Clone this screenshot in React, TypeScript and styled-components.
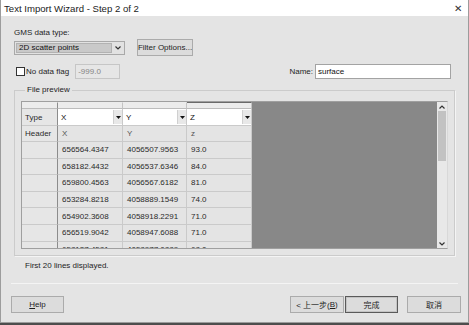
import React from "react";
import styled, { createGlobalStyle, css } from "styled-components";

const GlobalStyle = createGlobalStyle`
  * { box-sizing: border-box; }
  body {
    margin: 0;
    background: #4d4d4d;
    font-family: "Liberation Sans", "Noto Sans CJK SC", sans-serif;
    font-size: 8px;
    color: #1e1e1e;
  }
`;

const Window = styled.div`
  width: 469px;
  height: 323px;
  background: #e4e4e4;
  border: 1px solid #9c9c9c;
  border-top: none;
  display: flex;
  flex-direction: column;
`;

const TitleBar = styled.div`
  height: 16px;
  background: #ffffff;
  display: flex;
  align-items: center;
  justify-content: space-between;
  padding: 0 6px 0 3px;
  font-size: 9.6px;
  color: #222;
`;

const CloseGlyph = styled.span`
  font-size: 10px;
  color: #333;
`;

const Main = styled.div`
  padding: 12px 13px 0 13px;
  display: flex;
  flex-direction: column;
`;

const Label = styled.div`
  line-height: 10px;
  margin-bottom: 1px;
`;

const Row = styled.div<{ top?: number }>`
  display: flex;
  align-items: center;
  height: 17px;
  white-space: nowrap;
  margin-top: ${({ top }) => top ?? 0}px;
`;

const Combo = styled.div`
  width: 111px;
  height: 14px;
  border: 1px solid #a9a9a9;
  background: #e2e2e2;
  display: flex;
  align-items: stretch;
  padding: 1px;
`;

const ComboValue = styled.div`
  flex: 1;
  background: #c9c9c9;
  border: 1px solid #b2b2b2;
  display: flex;
  align-items: center;
  padding-left: 2px;
  color: #111;
`;

const ComboArrow = styled.div`
  width: 11px;
  display: flex;
  align-items: center;
  justify-content: center;
  color: #555;
`;

const Button = styled.button<{ $primary?: boolean; $w: number }>`
  width: ${({ $w }) => $w}px;
  height: 17px;
  padding: 0;
  background: #dcdcdc;
  border: 1px solid #ababab;
  font-family: inherit;
  font-size: 8px;
  color: #1e1e1e;
  white-space: nowrap;
  display: flex;
  align-items: center;
  justify-content: center;
  ${({ $primary }) =>
    $primary &&
    css`
      border: 1px solid #5a5a5a;
      box-shadow: inset 0 0 0 1px #c4c4c4;
    `}
`;

const Checkbox = styled.span`
  width: 9px;
  height: 9px;
  background: #fff;
  border: 1px solid #333;
  margin: 0 1px 0 2px;
`;

const TextInput = styled.div<{ $disabled?: boolean; $w: number }>`
  width: ${({ $w }) => $w}px;
  height: 15px;
  padding-left: 2px;
  display: flex;
  align-items: center;
  background: ${({ $disabled }) => ($disabled ? "#e6e6e6" : "#ffffff")};
  border: 1px solid ${({ $disabled }) => ($disabled ? "#c6c6c6" : "#a3a3a3")};
  color: ${({ $disabled }) => ($disabled ? "#858585" : "#111")};
`;

const Spacer = styled.div`
  flex: 1;
`;

const Group = styled.fieldset`
  margin: 5px 0 0 0;
  padding: 6px 6px 6px 6px;
  border: 1px solid #cbcbcb;
  box-shadow: 1px 1px 0 #f4f4f4;
  height: 171px;
  min-width: 0;
`;

const Legend = styled.legend`
  line-height: 10px;
  padding: 0 2px;
  margin-left: 4px;
  color: #222;
`;

const Grid = styled.div`
  display: flex;
  height: 148px;
  border: 1px solid #9f9f9f;
  border-right-color: #d8d8d8;
  background: #888888;
  overflow: hidden;
`;

const Cells = styled.div`
  display: grid;
  grid-template-columns: 36px 65px 64px 65px;
  grid-template-rows: 7px 17px 16px repeat(7, 16.6px);
  align-self: flex-start;
  background: #e4e4e4;
`;

const Cell = styled.div<{ $head?: boolean; $muted?: boolean }>`
  border-right: 1px solid ${({ $head }) => ($head ? "#8c8c8c" : "#cacaca")};
  border-bottom: 1px solid #cacaca;
  display: flex;
  align-items: center;
  padding-left: ${({ $head }) => ($head ? 3 : 4)}px;
  background: ${({ $head }) => ($head ? "#e6e6e6" : "#e4e4e4")};
  color: ${({ $muted }) => ($muted ? "#555" : "#2a2a2a")};
  white-space: nowrap;
`;

const ColHead = styled.div<{ $active?: boolean; $edge?: boolean }>`
  border-right: 1px solid ${({ $edge }) => ($edge ? "#8c8c8c" : "#c4c4c4")};
  border-bottom: 1px solid #bcbcbc;
  border-top: 1px solid ${({ $active }) => ($active ? "#6a6a6a" : "transparent")};
  background: #ececec;
`;

const TypeCell = styled.div`
  border-right: 1px solid #cacaca;
  border-bottom: 1px solid #cacaca;
  background: #ffffff;
  display: flex;
  align-items: stretch;
  padding: 1px 0 1px 0;
`;

const TypeValue = styled.div`
  flex: 1;
  display: flex;
  align-items: center;
  padding-left: 3px;
  color: #111;
`;

const TypeArrow = styled.div`
  width: 9px;
  background: #e8e8e8;
  border-left: 1px solid #d0d0d0;
  display: flex;
  align-items: center;
  justify-content: center;
`;

const Scrollbar = styled.div`
  width: 10px;
  margin-left: auto;
  background: #e8e8e8;
  display: flex;
  flex-direction: column;
  align-items: center;
`;

const ScrollBtn = styled.div`
  height: 9px;
  width: 100%;
  display: flex;
  align-items: center;
  justify-content: center;
`;

const Thumb = styled.div`
  width: 8px;
  height: 50px;
  background: #c2c2c2;
`;

const Note = styled.div`
  margin: 5px 0 0 11px;
  line-height: 10px;
`;

const Separator = styled.div`
  margin: 12px 10px 0 10px;
  height: 1px;
  background: #b9b9b9;
  border-bottom: 1px solid #f4f4f4;
`;

const Footer = styled.div`
  display: flex;
  align-items: center;
  margin-top: 12px;
  padding: 0 7px 0 10px;
  gap: 1px;
`;

const U = styled.span`
  text-decoration: underline;
`;

const Chevron = ({ up }: { up?: boolean }) => (
  <svg width="6" height="4" viewBox="0 0 6 4">
    <path
      d={up ? "M0.5 3.5 L3 1 L5.5 3.5" : "M0.5 0.5 L3 3 L5.5 0.5"}
      stroke="#333"
      strokeWidth="1.2"
      fill="none"
    />
  </svg>
);

const Tri = () => (
  <svg width="5" height="3" viewBox="0 0 5 3">
    <path d="M0 0 H5 L2.5 3 Z" fill="#111" />
  </svg>
);

const data = [
  ["656564.4347", "4056507.9563", "93.0"],
  ["658182.4432", "4056537.6346", "84.0"],
  ["659800.4563", "4056567.6182", "81.0"],
  ["653284.8218", "4058889.1549", "74.0"],
  ["654902.3608", "4058918.2291", "71.0"],
  ["656519.9042", "4058947.6088", "71.0"],
  ["658137.4581", "4058977.0889", "68.0"],
];

export default function App() {
  return (
    <>
      <GlobalStyle />
      <Window>
        <TitleBar>
          <span>Text Import Wizard - Step 2 of 2</span>
          <CloseGlyph>✕</CloseGlyph>
        </TitleBar>
        <Main>
          <Label>GMS data type:</Label>
          <Row>
            <Combo>
              <ComboValue>2D scatter points</ComboValue>
              <ComboArrow>
                <Chevron />
              </ComboArrow>
            </Combo>
            <Button $w={56} style={{ marginLeft: 12 }}>
              Filter Options...
            </Button>
          </Row>
          <Row top={7}>
            <Checkbox />
            <span>No data flag</span>
            <TextInput $disabled $w={45} style={{ marginLeft: 6 }}>
              -999.0
            </TextInput>
            <Spacer />
            <span>Name:</span>
            <TextInput $w={136} style={{ marginLeft: 2, marginRight: 4 }}>
              surface
            </TextInput>
          </Row>
          <Group>
            <Legend>File preview</Legend>
            <Grid>
              <Cells>
                <ColHead $edge />
                <ColHead />
                <ColHead />
                <ColHead $active />
                <Cell $head>Type</Cell>
                {["X", "Y", "Z"].map((t) => (
                  <TypeCell key={t}>
                    <TypeValue>{t}</TypeValue>
                    <TypeArrow>
                      <Tri />
                    </TypeArrow>
                  </TypeCell>
                ))}
                <Cell $head>Header</Cell>
                <Cell $muted>X</Cell>
                <Cell $muted>Y</Cell>
                <Cell $muted>z</Cell>
                {data.map((r, i) => (
                  <React.Fragment key={i}>
                    <Cell $head />
                    {r.map((v) => (
                      <Cell key={v}>{v}</Cell>
                    ))}
                  </React.Fragment>
                ))}
              </Cells>
              <Scrollbar>
                <ScrollBtn>
                  <Chevron up />
                </ScrollBtn>
                <Thumb />
                <Spacer />
                <ScrollBtn>
                  <Chevron />
                </ScrollBtn>
              </Scrollbar>
            </Grid>
          </Group>
          <Note>First 20 lines displayed.</Note>
        </Main>
        <Separator />
        <Footer>
          <Button $w={53}>
            <U>H</U>elp
          </Button>
          <Spacer />
          <Button $w={54}>
            &lt; 上一步(<U>B</U>)
          </Button>
          <Button $w={53} $primary>
            完成
          </Button>
          <Button $w={54} style={{ marginLeft: 8 }}>
            取消
          </Button>
        </Footer>
      </Window>
    </>
  );
}
